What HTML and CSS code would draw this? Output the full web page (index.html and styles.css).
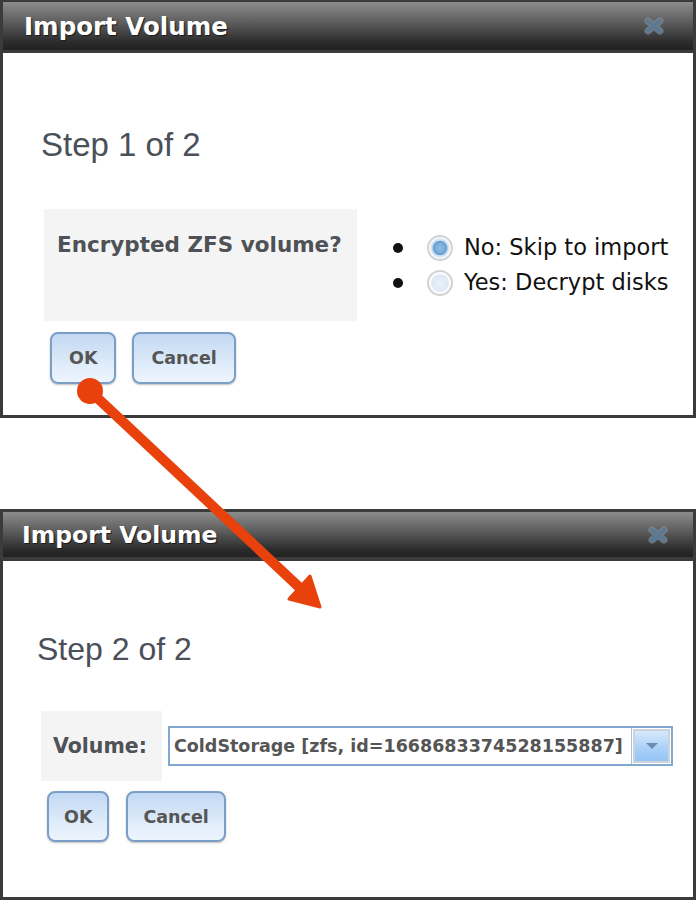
FILE: index.html
```html
<!DOCTYPE html>
<html lang="en">
<head>
    <meta charset="UTF-8">
    <meta name="viewport" content="width=device-width, initial-scale=1.0">
    <title>Import Volume</title>
    <link rel="stylesheet" href="styles.css">
</head>
<body>
    <div class="page">

        <!-- Step 1: encryption question -->
        <section class="dialog dialog-first">
            <header class="titlebar">
                <h2 class="title">Import Volume</h2>
                <span class="close">
                    <svg width="22" height="18" viewBox="0 0 22 18">
                        <path d="M5 4 L17 14 M17 4 L5 14" stroke="#8d98a3" stroke-width="7" stroke-linecap="round" opacity="0.6"/>
                        <path d="M5 4 L17 14 M17 4 L5 14" stroke="#5d7893" stroke-width="4.5" stroke-linecap="round"/>
                    </svg>
                </span>
            </header>
            <div class="dialog-body">
                <h1 class="step">Step 1 of 2</h1>
                <div class="form-row">
                    <div class="field-label">Encrypted ZFS volume?</div>
                    <ul class="choices">
                        <li><span class="radio radio-checked"></span>No: Skip to import</li>
                        <li><span class="radio"></span>Yes: Decrypt disks</li>
                    </ul>
                </div>
                <div class="actions">
                    <button class="btn">OK</button>
                    <button class="btn">Cancel</button>
                </div>
            </div>
        </section>

        <!-- Step 2: pick the volume -->
        <section class="dialog dialog-second">
            <header class="titlebar">
                <h2 class="title">Import Volume</h2>
                <span class="close">
                    <svg width="22" height="18" viewBox="0 0 22 18">
                        <path d="M5 4 L17 14 M17 4 L5 14" stroke="#8d98a3" stroke-width="7" stroke-linecap="round" opacity="0.6"/>
                        <path d="M5 4 L17 14 M17 4 L5 14" stroke="#5d7893" stroke-width="4.5" stroke-linecap="round"/>
                    </svg>
                </span>
            </header>
            <div class="dialog-body">
                <h1 class="step">Step 2 of 2</h1>
                <div class="form-row">
                    <div class="field-label">Volume:</div>
                    <div class="select">
                        <span class="select-value">ColdStorage [zfs, id=1668683374528155887]</span>
                        <span class="select-button"><span class="select-arrow"></span></span>
                    </div>
                </div>
                <div class="actions">
                    <button class="btn">OK</button>
                    <button class="btn">Cancel</button>
                </div>
            </div>
        </section>

        <!-- annotation arrow drawn over both dialogs -->
        <svg class="arrow" width="696" height="900" viewBox="0 0 696 900">
            <circle cx="90" cy="391" r="13" fill="#e8410c"/>
            <line x1="90" y1="391" x2="300" y2="588" stroke="#e8410c" stroke-width="10"/>
            <polygon points="320,607 289,599 310,576" fill="#e8410c" stroke="#e8410c" stroke-width="3" stroke-linejoin="round"/>
        </svg>
    </div>
</body>
</html>
```
FILE: styles.css
```css
* {
    margin: 0;
    padding: 0;
    box-sizing: border-box;
}

body {
    background: #fff;
}

.page {
    position: relative;
    width: 696px;
    height: 900px;
}

.dialog {
    background: #fff;
    border: 3px solid #3b3b3b;
}

.titlebar {
    display: flex;
    align-items: center;
    justify-content: space-between;
    background: linear-gradient(#8c8c8c, #5a5a5a 45%, #2a2a2a 85%, #222);
    border-bottom: 3px solid #3b3b3b;
}

.title {
    font-family: "DejaVu Sans", Verdana, sans-serif;
    font-weight: bold;
    color: #fff;
    text-shadow: 1px 1px 1px #1a1a1a;
}

.close {
    display: flex;
}

.step {
    font-family: "Liberation Sans", Arial, sans-serif;
    font-weight: normal;
    color: #4a4f58;
}

.form-row {
    display: flex;
    align-items: flex-start;
}

.field-label {
    background: #f4f4f4;
    font-family: "DejaVu Sans", Verdana, sans-serif;
    font-weight: bold;
    color: #4e5156;
}

.actions {
    display: flex;
}

.btn {
    font-family: "DejaVu Sans", Verdana, sans-serif;
    font-weight: bold;
    font-size: 17.5px;
    color: #555;
    border: 2px solid #7b9ec7;
    border-radius: 8px;
    background: linear-gradient(#c2d8f2, #e2eefb 70%, #edf4fd);
    box-shadow: 0 1px 2px rgba(0, 0, 0, 0.25);
}

/* first dialog */
.dialog-first {
    height: 418px;
    border-top-width: 2px;
}

.dialog-first .titlebar {
    height: 51px;
}

.dialog-first .title {
    font-size: 24.5px;
    padding-left: 21px;
}

.dialog-first .close {
    margin-right: 28px;
}

.dialog-first .dialog-body {
    padding: 73px 0 31px 38px;
}

.dialog-first .step {
    font-size: 33px;
    line-height: 38px;
}

.dialog-first .form-row {
    margin: 45px 0 0 3px;
}

.dialog-first .field-label {
    width: 313px;
    height: 112px;
    padding: 23px 0 0 13px;
    font-size: 21.5px;
    line-height: 26px;
}

.dialog-first .actions {
    margin: 11px 0 0 9px;
    gap: 16px;
}

.dialog-first .btn {
    height: 52px;
    padding: 0 17px;
}

.choices {
    list-style: none;
    margin: 21px 0 0 36px;
    font-family: "DejaVu Sans", Verdana, sans-serif;
    font-size: 22.5px;
    line-height: 35px;
    color: #111;
}

.choices li {
    display: flex;
    align-items: center;
}

.choices li::before {
    content: "";
    width: 10px;
    height: 10px;
    border-radius: 50%;
    background: #111;
    margin-right: 24px;
}

.radio {
    width: 26px;
    height: 26px;
    margin-right: 11px;
    border-radius: 50%;
    border: 2px solid #d2d2d2;
    background: radial-gradient(circle, #eaf2fa 0, #dce8f4 8px, #f6f9fc 9.5px, #fff 11px);
}

.radio-checked {
    background: radial-gradient(circle, #8fbde4 0, #74a9d9 5.5px, #5f97c8 6.5px, #bcd6ee 7.5px, #e9f1f9 9.5px, #fff 11px);
}

/* second dialog */
.dialog-second {
    height: 391px;
    margin-top: 91px;
}

.dialog-second .titlebar {
    height: 49px;
    border-bottom-width: 4px;
}

.dialog-second .title {
    font-size: 23.5px;
    padding-left: 19px;
    padding-top: 1px;
}

.dialog-second .close {
    margin-right: 24px;
}

.dialog-second .dialog-body {
    padding: 70px 0 55px 34px;
}

.dialog-second .step {
    font-size: 32px;
    line-height: 37px;
}

.dialog-second .form-row {
    align-items: center;
    margin: 43px 0 0 4px;
    gap: 6px;
}

.dialog-second .field-label {
    display: flex;
    align-items: center;
    width: 121px;
    height: 70px;
    padding-left: 12px;
    font-size: 20.5px;
}

.dialog-second .actions {
    margin: 10px 0 0 10px;
    gap: 17px;
}

.dialog-second .btn {
    height: 51px;
    padding: 0 15px;
}

.select {
    display: flex;
    width: 505px;
    height: 40px;
    border: 2px solid #82a8d0;
    background: #fff;
}

.select-value {
    flex: 1;
    display: flex;
    align-items: center;
    padding-left: 4px;
    font-family: "DejaVu Sans", Verdana, sans-serif;
    font-weight: bold;
    font-size: 17.5px;
    color: #555;
    white-space: nowrap;
}

.select-button {
    display: flex;
    width: 40px;
    border-left: 1px solid #a6c3e2;
    padding: 1px;
}

.select-arrow {
    flex: 1;
    display: flex;
    align-items: center;
    justify-content: center;
    border: 2px solid #cfd3d8;
    background: linear-gradient(#d6e8fb, #a9d0f8 60%, #94c4f5);
}

.select-arrow::after {
    content: "";
    border-left: 6px solid transparent;
    border-right: 6px solid transparent;
    border-top: 6px solid #6a8caf;
}

.arrow {
    position: absolute;
    top: 0;
    left: 0;
    pointer-events: none;
}
```
